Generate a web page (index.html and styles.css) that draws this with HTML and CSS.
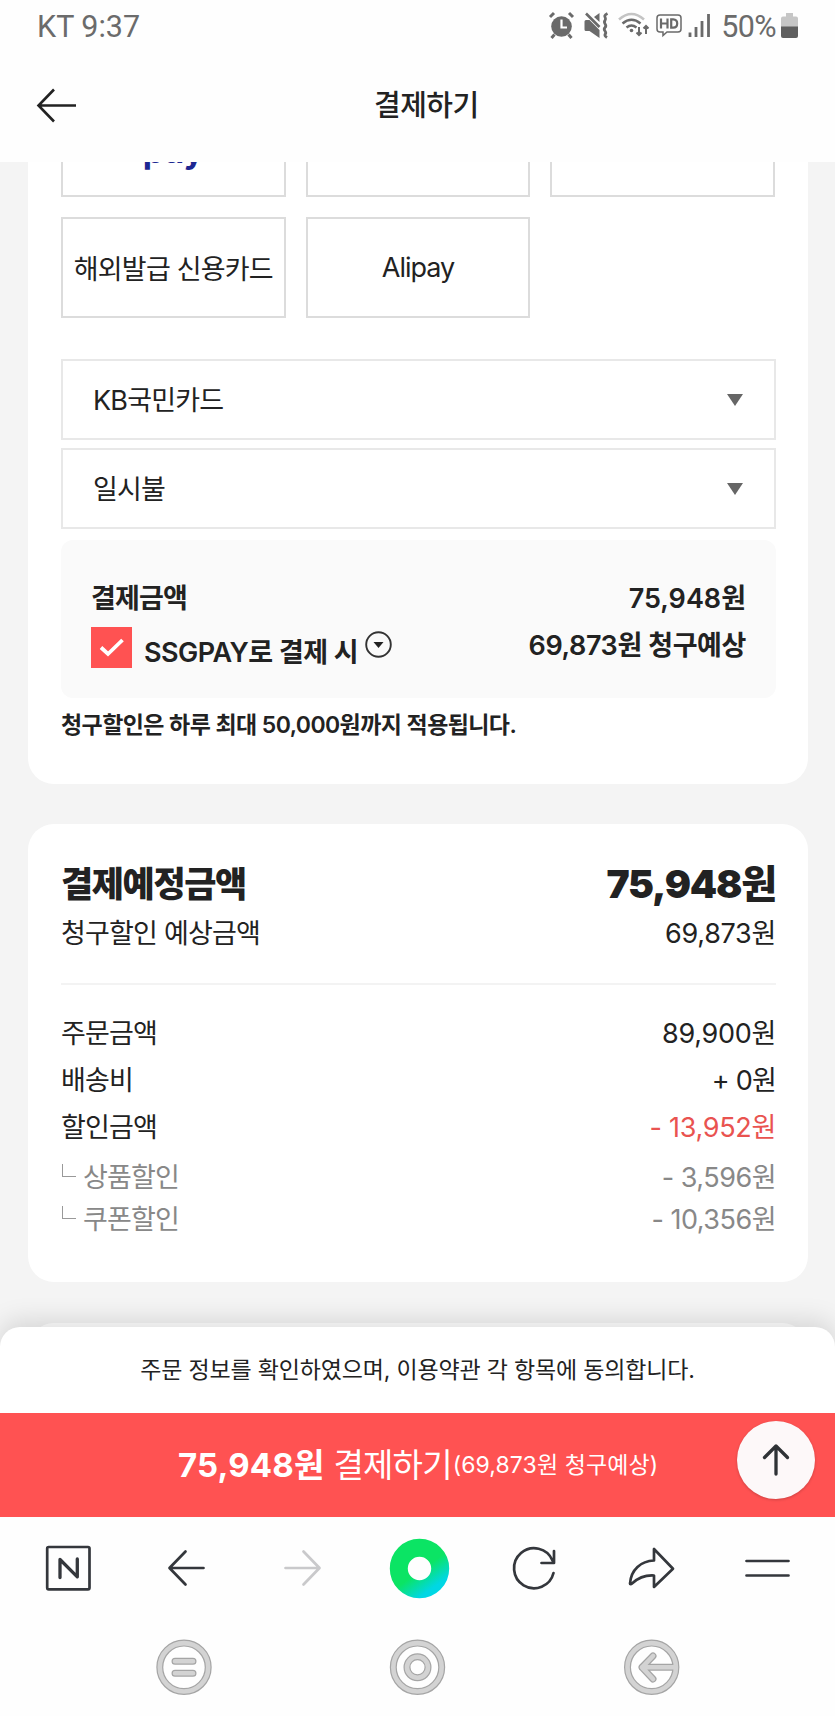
FILE: index.html
```html
<!DOCTYPE html>
<html lang="ko">
<head>
<meta charset="utf-8">
<title>결제하기</title>
<link rel="stylesheet" href="styles.css">
</head>
<body>
<div class="phone">
  <div class="status">
    <span class="status-time">KT 9:37</span>
    <div class="status-icons">
      <svg width="214" height="30" viewBox="0 0 214 30" fill="none" stroke="#6a6a6a" stroke-width="1.8">
        <circle cx="13.500" cy="15.500" r="10.300" fill="#6a6a6a" stroke="none"/>
        <path d="M2 6l4-4M25 6l-4-4M6.500 23.500l-3 3.500M20.500 23.500l3 3.500" stroke-width="3"/>
        <path d="M13.500 8.500v8h5.500" stroke="#fff" stroke-width="2.200"/>
        <path d="M36.500 10.500q0-1.500 1.500-1.500h3.500L51.500 19v8L41.500 20H38q-1.500 0-1.500-1.500z" fill="#6a6a6a" stroke="none"/>
        <path d="M38 2.500l13.500 13.500" stroke-width="2.600"/><path d="M46 6l5.500-4v9z" fill="#6a6a6a" stroke="none"/>
        <path d="M59.500 2.500c-6 3 0 4-2.500 7s3 4 0 7 3 4 0 7q-.5 1.500 2 3" stroke-width="2.800"/>
        <path d="M71 8.500q12.500-11 25 0" stroke="#c4c4c4" stroke-width="2.600"/>
        <path d="M74.500 12.500q9-7.500 18 0M78.500 16.500q5-4 10 0" stroke-width="2.500"/>
        <circle cx="83.500" cy="19.500" r="1.800" fill="#6a6a6a" stroke="none"/>
        <path d="M91 16v8M88.500 21.500l2.500 2.500 2.500-2.500M98 23V15M95.500 17.500l2.500-2.500 2.500 2.500" stroke-width="2"/>
        <path d="M112 4h18q3 0 3 3v11q0 3-3 3h-11l-4 3.500V21h-3q-3 0-3-3V7q0-3 3-3z" stroke-width="1.500"/>
        <path d="M113 7.500v10M119.500 7.500v10M113 12.500h6.500M123.200 8.400v8.200h2q4 0 4-4.100t-4-4.200z" stroke-width="2.200"/>
        <path d="M142 21.500V26M148 16v10M154 10v16M160.500 3v23" stroke-width="2.800"/>
      </svg>
      <span class="status-pct">50%</span>
      <svg width="17" height="26" viewBox="0 0 17 26"><path d="M5 0h7v3.500h3q2 0 2 2V14H0V5.500q0-2 2-2h3z" fill="#c6c6c6"/><path d="M0 13.500h17V23q0 2-2 2H2q-2 0-2-2z" fill="#5f5f5f"/></svg>
    </div>
  </div>

  <header class="header">
    <svg class="back" width="42" height="36" viewBox="0 0 42 36" fill="none" stroke="#222" stroke-width="2.600"><path d="M40 17.500H2.500M18 1.500l-15.500 16 15.500 16"/></svg>
    <h1 class="title">결제하기</h1>
  </header>

  <main class="content">
    <section class="card methods-card">
      <div class="methods">
        <div class="method clipped"><span class="pay-logo">pay</span></div>
        <div class="method"></div>
        <div class="method"></div>
        <div class="method"><span class="txt">해외발급 신용카드</span></div>
        <div class="method"><span class="txt alipay">Alipay</span></div>
      </div>
      <div class="select"><span class="txt">KB국민카드</span><i class="caret"></i></div>
      <div class="select"><span class="txt">일시불</span><i class="caret"></i></div>
      <div class="billing">
        <div class="billing-row"><b class="strong">결제금액</b><b class="strong wide">75,948원</b></div>
        <div class="billing-row ssg">
          <div class="agree">
            <svg class="check" width="41" height="41" viewBox="0 0 41 41"><path d="M0 0h41v41H0z" fill="#ff5252"/><path d="M10 20.500l7 6.500L31.500 13" fill="none" stroke="#fff" stroke-width="3.800"/></svg>
            <b class="strong ssg-label">SSGPAY로 결제 시</b>
            <svg class="more" width="27" height="27" viewBox="0 0 27 27"><circle cx="13.500" cy="13.500" r="12.300" fill="none" stroke="#333" stroke-width="1.900"/><path d="M8.500 11h10l-5 6z" fill="#222"/></svg>
          </div>
          <b class="strong expected">69,873원 청구예상</b>
        </div>
      </div>
      <p class="notice">청구할인은 하루 최대 50,000원까지 적용됩니다.</p>
    </section>

    <section class="card summary">
      <div class="row total"><b>결제예정금액</b><b class="total-price">75,948원</b></div>
      <div class="row first"><span>청구할인 예상금액</span><span class="num">69,873원</span></div>
      <div class="divider"></div>
      <div class="row"><span>주문금액</span><span class="num">89,900원</span></div>
      <div class="row"><span>배송비</span><span>+ 0원</span></div>
      <div class="row"><span>할인금액</span><span class="num red">- 13,952원</span></div>
      <div class="row sub"><span class="branch">상품할인</span><span class="num">- 3,596원</span></div>
      <div class="row sub"><span class="branch">쿠폰할인</span><span class="num">- 10,356원</span></div>
    </section>
    <section class="card next"></section>
  </main>

  <div class="sheet">
    <p class="terms">주문 정보를 확인하였으며, 이용약관 각 항목에 동의합니다.</p>
    <div class="pay-button">
      <b class="pay-price">75,948원</b><span class="pay-label">결제하기</span><span class="pay-note">(69,873원 청구예상)</span>
      <div class="to-top"><svg width="28" height="34" viewBox="0 0 28 34" fill="none" stroke="#2f3236" stroke-width="3.300" stroke-linecap="round" stroke-linejoin="round"><path d="M14 31V3M2.500 14.500L14 3l11.500 11.500"/></svg></div>
    </div>
  </div>

  <nav class="toolbar">
    <svg width="835" height="102" viewBox="0 0 835 102" fill="none" stroke="#34373c" stroke-width="2.700" stroke-linecap="round" stroke-linejoin="round">
      <defs><linearGradient id="g" x1=".35" y1=".25" x2=".85" y2=".95"><stop offset=".4" stop-color="#0be464"/><stop offset="1" stop-color="#00d7e4"/></linearGradient></defs>
      <rect x="47.200" y="30" width="42.300" height="42.300" rx="1.500"/>
      <path d="M60 60.500V42.500l17.300 17.300V42" stroke-width="3.300"/>
      <path d="M203.500 51H170M185.500 34.500L169.500 51l16 16.500"/>
      <path d="M285.500 51H319M303.500 34.500L319.500 51l-16 16.500" stroke="#c9c9cb"/>
      <circle cx="419.500" cy="51.500" r="20.700" stroke="url(#g)" stroke-width="18"/>
      <path d="M553.500 56A20 20 0 1 1 552.500 43.500M554 34v12h-12.500"/>
      <path d="M654 32v11.500c-13 .5-23 9-24 23 0 1 1 1 2 0 6.500-6 13.500-8.500 22-8V70l19-18.300z"/>
      <path d="M746.500 44H788.500M746.500 58.500H788.500"/>
    </svg>
  </nav>
  <div class="sysnav">
    <svg width="835" height="98" viewBox="0 0 835 98" fill="none" stroke-linecap="round" stroke-linejoin="round">
      <g stroke="#a5a5a5" stroke-width="7">
        <circle cx="184" cy="48.300" r="24.200"/><path d="M175 42.300h18M175 54.300h18"/>
        <circle cx="417.500" cy="48.300" r="24.200"/><circle cx="417.500" cy="48.300" r="10.500"/>
        <circle cx="651.700" cy="48.300" r="24.200"/><path d="M674 48.300H642M653 37L642 48.300 653 60"/>
      </g>
      <g stroke="#d3d3d3" stroke-width="4.600">
        <circle cx="184" cy="48.300" r="24.200"/><path d="M175 42.300h18M175 54.300h18"/>
        <circle cx="417.500" cy="48.300" r="24.200"/><circle cx="417.500" cy="48.300" r="10.500"/>
        <circle cx="651.700" cy="48.300" r="24.200"/><path d="M674 48.300H642M653 37L642 48.300 653 60"/>
      </g>
    </svg>
  </div>
</div>
</body>
</html>
```
FILE: styles.css
```css
* { box-sizing: border-box; }
body {
  margin: 0;
  background: #fff;
  color: #222;
  font-family: Inter, "Noto Sans CJK KR", sans-serif;
  font-size: 27px;
  letter-spacing: -0.8px;
  white-space: nowrap;
}
h1, p { margin: 0; font-weight: 400; }
svg { display: block; flex: none; }
.phone { width: 835px; height: 1716px; overflow: hidden; display: flex; flex-direction: column; background: #fefefe; }

.status {
  height: 52px;
  flex: none;
  display: flex;
  justify-content: space-between;
  padding: 0 37px 0 37px;
  font-family: Roboto, sans-serif;
  font-size: 30.5px;
  line-height: 54px;
  color: #6b6b6b;
  letter-spacing: 0;
}
.status-icons { display: flex; align-items: flex-start; }
.status-icons svg { margin-top: 11px; }
.status-icons svg:last-child { margin-top: 13px; }
.status-icons svg:first-child { margin-right: -41px; }
.status-pct { margin-right: 5px; letter-spacing: -0.6px; }

.header { height: 110px; flex: none; display: flex; align-items: flex-start; padding: 36px 0 0 36px; }
.back { margin-right: 296px; }
.title { font-size: 29px; font-weight: 500; line-height: 36px; letter-spacing: -0.5px; }

.content { height: 1187px; flex: none; overflow: hidden; background: #f4f4f4; padding: 0 27px 0 28px; }
.card { background: #fff; border-radius: 26px; padding: 0 32px 0 33px; }
.methods-card { height: 622px; margin-bottom: 40px; border-radius: 0 0 26px 26px; overflow: hidden; }
.methods { display: grid; grid-template-columns: repeat(3, 1fr); grid-auto-rows: 101px; gap: 20px; margin: -66px 1px 0 0; }
.method { border: 2px solid #dcdcdc; display: flex; align-items: center; justify-content: center; }
.pay-logo { font-size: 34px; font-weight: 700; color: #1d2792; letter-spacing: 0; padding: 7px 0 0; }
.alipay { letter-spacing: -1px; }
.select { height: 81px; border: 2px solid #e8e8e8; display: flex; align-items: center; justify-content: space-between; padding: 0 31px 2px 30px; margin-bottom: 8px; }
.select .caret { margin-top: 2px; }
.methods + .select { margin-top: 41px; }
.caret { border: 8px solid transparent; border-top: 12px solid #666; border-bottom: 0; }
.billing { height: 158px; border-radius: 12px; background: #fafafa; padding: 37px 30px 0 30px; margin-top: 11px; }
.billing-row { display: flex; justify-content: space-between; line-height: 44px; height: 47px; }
.strong { font-weight: 600; }
.wide { letter-spacing: 0; }
.expected { letter-spacing: -0.4px; }
.agree { display: flex; align-items: flex-start; }
.check { margin-top: 3px; }
.ssg-label { margin-left: 12px; line-height: 58px; letter-spacing: -0.52px; }
.more { margin: 7px 0 0 7px; }
.notice { font-size: 23px; font-weight: 600; line-height: 30px; margin-top: 12px; letter-spacing: -0.58px; }

.summary { height: 458px; padding-top: 35px; }
.row { display: flex; justify-content: space-between; height: 47px; line-height: 47px; }
.num { letter-spacing: -0.3px; }
.total { height: 51px; line-height: 51px; font-size: 35px; font-weight: 700; letter-spacing: -1.4px; }
.total-price { font-size: 39px; line-height: 50px; letter-spacing: -1.2px; }
.first { height: 73px; }
.divider { height: 2px; background: #f3f3f3; margin-bottom: 25px; }
.red { color: #e95350; }
.sub { color: #888; height: 42px; margin-top: 3px; }
.sub .num { letter-spacing: -0.5px; }
.sub + .sub { margin-top: 0; }
.branch { display: flex; }
.branch::before { content: ""; width: 13px; height: 12px; margin: 10px 7px 0 1px; border: solid #999; border-width: 0 0 1.5px 1.5px; }
.next { height: 60px; margin-top: 41px; }

.sheet { position: relative; height: 190px; flex: none; margin-top: -22px; background: #fff; border-radius: 20px 20px 0 0; box-shadow: 0 -6px 26px rgba(0, 0, 0, .13); }
.terms { height: 86px; line-height: 86px; text-align: center; font-size: 23px; letter-spacing: -0.17px; }
.pay-button { height: 104px; background: #ff5252; color: #fff; display: flex; align-items: center; padding: 0 0 5px 178px; }
.pay-price { font-size: 33px; font-weight: 700; letter-spacing: 0.15px; }
.pay-label { font-size: 33px; margin-left: 9px; letter-spacing: -0.8px; }
.pay-note { font-size: 23px; letter-spacing: 0.1px; margin: 1px 0 0 1px; }
.to-top { position: absolute; left: 737px; top: 94px; width: 78px; height: 78px; border-radius: 50%; background: #fdf8f9; display: flex; align-items: center; justify-content: center; box-shadow: 0 1px 3px rgba(0, 0, 0, .2); }
.toolbar { height: 102px; flex: none; background: #fefefe; position: relative; }
.sysnav { height: 97px; flex: none; }
```
